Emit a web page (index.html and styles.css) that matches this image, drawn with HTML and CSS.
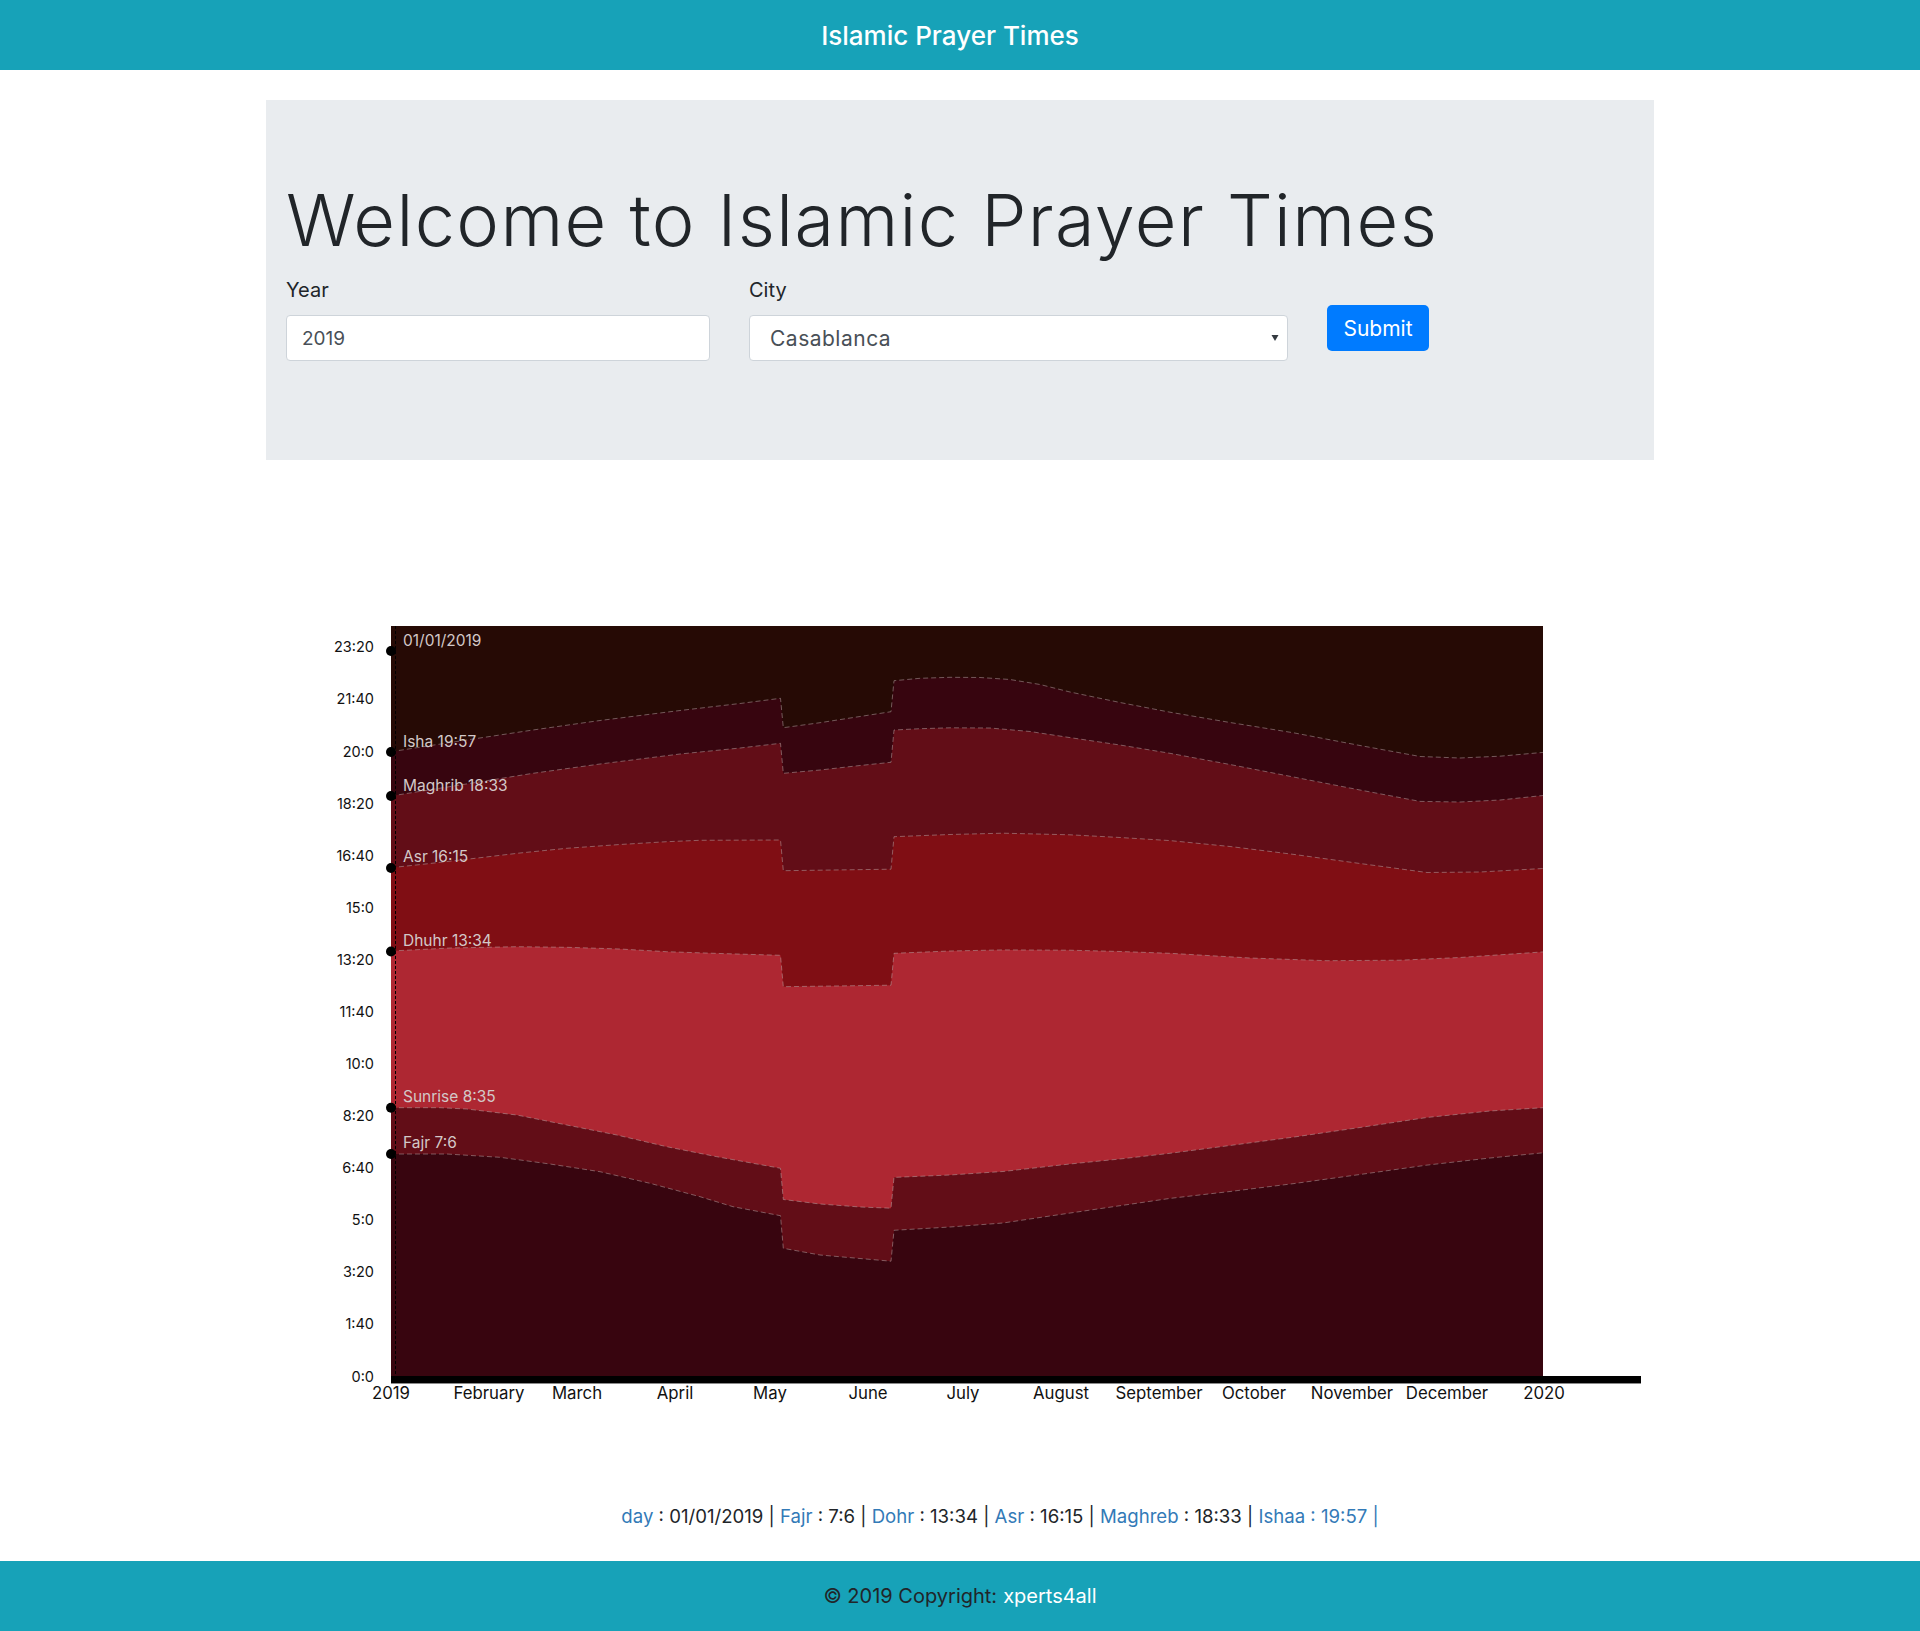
FILE: index.html
```html
<!DOCTYPE html>
<html lang="en">
<head>
<meta charset="utf-8">
<title>Islamic Prayer Times</title>
<link rel="stylesheet" href="styles.css">
</head>
<body>
<header class="topbar"><span class="brand">Islamic Prayer Times</span></header>

<section class="jumbo">
  <h1 class="display">Welcome to Islamic Prayer Times</h1>
  <form class="form-row">
    <div class="group group-year">
      <label class="lbl" for="year">Year</label>
      <input class="ctrl ctrl-year" id="year" type="text" value="2019">
    </div>
    <div class="group group-city">
      <label class="lbl">City</label>
      <div class="ctrl select"><span>Casablanca</span><svg class="caret" width="8" height="6" viewBox="0 0 8 6"><polygon points="0.5,0 7.5,0 4,6" fill="#343a40"/></svg></div>
    </div>
    <button class="btn" type="button">Submit</button>
  </form>
</section>

<section class="chart-wrap">
<svg class="chart" width="1340" height="820" viewBox="320 600 1340 820">
  <rect x="391" y="626" width="1152" height="750" fill="#260a05"/>
  <path fill="#37050f" d="M391,751.7 L460,741 L533,730 L600,720.5 L680,710.5 L740,703.5 L780.5,698.3 L783.3,727.7 L820,722.7 L860,716.5 L891,711.7 L894,680.7 L920,678.3 L950,677.3 L980,677.5 L1010,679.5 L1040,684.5 L1070,692 L1120,702.5 L1170,712.2 L1230,722.5 L1293,732.7 L1360,745.5 L1420,756.5 L1460,758 L1500,756.2 L1543,752.4 L1543,1376 L391,1376 Z"/>
  <path fill="#620d17" d="M391,796 L460,785 L533,773.3 L600,764 L680,754 L740,748 L780.5,743.3 L783.3,773.3 L820,770 L860,765.5 L891,762.3 L894,730 L920,728.7 L950,727.8 L990,728 L1030,731.5 L1070,737.6 L1120,745 L1170,753.3 L1230,764.5 L1293,776.9 L1360,790 L1420,801.4 L1460,802 L1500,800 L1543,795.5 L1543,1376 L391,1376 Z"/>
  <path fill="#800e14" d="M391,867.7 L430,863.5 L466.7,859.3 L520,853 L566.7,848.3 L620,844.5 L666.7,841.7 L700,840.3 L780.5,840 L783.3,870.7 L891,869.2 L894,836.7 L950,834.5 L1003,833.2 L1070,834.8 L1120,837.5 L1170,840.6 L1230,846.5 L1293,854.3 L1360,863.5 L1427,872.5 L1480,872 L1543,868.5 L1543,1376 L391,1376 Z"/>
  <path fill="#ae2732" d="M391,951 L450,948 L516.7,946.7 L566.7,947.3 L620,949 L666.7,951.7 L720,953.5 L780.5,955.3 L783.3,986.7 L891,985.2 L894,953.3 L950,951 L1003,949.9 L1070,950.2 L1120,951.5 L1170,953.3 L1250,958 L1327,960.7 L1400,960.2 L1460,957.5 L1543,951.9 L1543,1376 L391,1376 Z"/>
  <path fill="#620d17" d="M391,1107.7 L440,1107.7 L466.7,1109 L516.7,1115 L566.7,1125 L616.7,1135 L666.7,1146.7 L716.7,1156.7 L780.5,1168.3 L783.3,1199.5 L820,1204 L860,1207 L891,1208.2 L894,1177.4 L950,1175 L1003,1171.5 L1070,1164 L1120,1159 L1170,1153.3 L1230,1145.5 L1293,1137.2 L1360,1127.5 L1427,1117.5 L1490,1111 L1543,1107.7 L1543,1376 L391,1376 Z"/>
  <path fill="#38050f" d="M391,1154 L446.7,1154 L500,1157.3 L550,1164 L600,1171.7 L650,1183.3 L700,1196.7 L733,1206.7 L780.5,1215.7 L783.3,1248.3 L820,1255 L860,1258.5 L891,1261.2 L894,1230.3 L950,1227 L1003,1223 L1050,1216 L1103,1208.2 L1170,1198.4 L1230,1191.5 L1293,1183.7 L1360,1174.5 L1427,1165.1 L1490,1158 L1543,1152.8 L1543,1376 L391,1376 Z"/>

  <g class="edges">
    <path d="M391,751.7 L460,741 L533,730 L600,720.5 L680,710.5 L740,703.5 L780.5,698.3 L783.3,727.7 L820,722.7 L860,716.5 L891,711.7 L894,680.7 L920,678.3 L950,677.3 L980,677.5 L1010,679.5 L1040,684.5 L1070,692 L1120,702.5 L1170,712.2 L1230,722.5 L1293,732.7 L1360,745.5 L1420,756.5 L1460,758 L1500,756.2 L1543,752.4"/>
    <path d="M391,796 L460,785 L533,773.3 L600,764 L680,754 L740,748 L780.5,743.3 L783.3,773.3 L820,770 L860,765.5 L891,762.3 L894,730 L920,728.7 L950,727.8 L990,728 L1030,731.5 L1070,737.6 L1120,745 L1170,753.3 L1230,764.5 L1293,776.9 L1360,790 L1420,801.4 L1460,802 L1500,800 L1543,795.5"/>
    <path d="M391,867.7 L430,863.5 L466.7,859.3 L520,853 L566.7,848.3 L620,844.5 L666.7,841.7 L700,840.3 L780.5,840 L783.3,870.7 L891,869.2 L894,836.7 L950,834.5 L1003,833.2 L1070,834.8 L1120,837.5 L1170,840.6 L1230,846.5 L1293,854.3 L1360,863.5 L1427,872.5 L1480,872 L1543,868.5"/>
    <path d="M391,951 L450,948 L516.7,946.7 L566.7,947.3 L620,949 L666.7,951.7 L720,953.5 L780.5,955.3 L783.3,986.7 L891,985.2 L894,953.3 L950,951 L1003,949.9 L1070,950.2 L1120,951.5 L1170,953.3 L1250,958 L1327,960.7 L1400,960.2 L1460,957.5 L1543,951.9"/>
    <path d="M391,1107.7 L440,1107.7 L466.7,1109 L516.7,1115 L566.7,1125 L616.7,1135 L666.7,1146.7 L716.7,1156.7 L780.5,1168.3 L783.3,1199.5 L820,1204 L860,1207 L891,1208.2 L894,1177.4 L950,1175 L1003,1171.5 L1070,1164 L1120,1159 L1170,1153.3 L1230,1145.5 L1293,1137.2 L1360,1127.5 L1427,1117.5 L1490,1111 L1543,1107.7"/>
    <path d="M391,1154 L446.7,1154 L500,1157.3 L550,1164 L600,1171.7 L650,1183.3 L700,1196.7 L733,1206.7 L780.5,1215.7 L783.3,1248.3 L820,1255 L860,1258.5 L891,1261.2 L894,1230.3 L950,1227 L1003,1223 L1050,1216 L1103,1208.2 L1170,1198.4 L1230,1191.5 L1293,1183.7 L1360,1174.5 L1427,1165.1 L1490,1158 L1543,1152.8"/>
  </g>

  <line class="cursor" x1="395.5" y1="626" x2="395.5" y2="1376"/>

  <rect x="391" y="1376" width="1250" height="7" fill="#000"/>
  <rect x="391" y="1383" width="1250" height="1" fill="#8a8a8a"/>

  <g class="dots">
    <circle cx="391" cy="651" r="5"/>
    <circle cx="391" cy="752" r="5"/>
    <circle cx="391" cy="796" r="5"/>
    <circle cx="391" cy="868" r="5"/>
    <circle cx="391" cy="951.5" r="5"/>
    <circle cx="391" cy="1107.7" r="5"/>
    <circle cx="391" cy="1154" r="5"/>
  </g>

  <g class="marks">
    <text x="403" y="645.5">01/01/2019</text>
    <text x="403" y="747">Isha 19:57</text>
    <text x="403" y="791">Maghrib 18:33</text>
    <text x="403" y="862">Asr 16:15</text>
    <text x="403" y="946">Dhuhr 13:34</text>
    <text x="403" y="1102">Sunrise 8:35</text>
    <text x="403" y="1147.5">Fajr 7:6</text>
  </g>

  <g class="yticks">
    <text x="374" y="1381.5">0:0</text>
    <text x="374" y="1329.4">1:40</text>
    <text x="374" y="1277.3">3:20</text>
    <text x="374" y="1225.2">5:0</text>
    <text x="374" y="1173.2">6:40</text>
    <text x="374" y="1121.1">8:20</text>
    <text x="374" y="1069">10:0</text>
    <text x="374" y="1016.9">11:40</text>
    <text x="374" y="964.8">13:20</text>
    <text x="374" y="912.7">15:0</text>
    <text x="374" y="860.7">16:40</text>
    <text x="374" y="808.6">18:20</text>
    <text x="374" y="756.5">20:0</text>
    <text x="374" y="704.4">21:40</text>
    <text x="374" y="652.3">23:20</text>
  </g>

  <g class="xticks">
    <text x="391" y="1398.5">2019</text>
    <text x="489" y="1398.5">February</text>
    <text x="577" y="1398.5">March</text>
    <text x="675" y="1398.5">April</text>
    <text x="770" y="1398.5">May</text>
    <text x="868" y="1398.5">June</text>
    <text x="963" y="1398.5">July</text>
    <text x="1061" y="1398.5">August</text>
    <text x="1159" y="1398.5">September</text>
    <text x="1254" y="1398.5">October</text>
    <text x="1352" y="1398.5">November</text>
    <text x="1447" y="1398.5">December</text>
    <text x="1544" y="1398.5">2020</text>
  </g>
</svg>
</section>

<p class="dayline"><span class="k">day</span> : 01/01/2019 | <span class="k">Fajr</span> : 7:6 | <span class="k">Dohr</span> : 13:34 | <span class="k">Asr</span> : 16:15 | <span class="k">Maghreb</span> : 18:33 | <span class="k">Ishaa : 19:57 |</span></p>

<footer class="foot">© 2019 Copyright: <span class="site">xperts4all</span></footer>
</body>
</html>
```

FILE: styles.css
```css
* { box-sizing: border-box; }
html, body { margin: 0; padding: 0; }
body {
  font-family: "Inter", "Open Sans", "Liberation Sans", sans-serif;
  color: #212529;
  background: #fff;
  width: 1920px;
}

.topbar {
  height: 70px;
  background: #17a2b8;
  display: flex;
  align-items: center;
  justify-content: center;
  padding-right: 20px;
}
.brand {
  color: #fff;
  font-size: 26px;
  font-weight: 500;
  line-height: 1;
  padding-top: 1px;
}

.jumbo {
  width: 1388px;
  height: 360px;
  margin: 30px auto 0;
  padding: 77px 20px 0;
  background: #e9ecef;
}
.display {
  margin: 0 0 12px;
  font-size: 72px;
  font-weight: 300;
  line-height: 86px;
  letter-spacing: 1.4px;
  color: #212529;
}
.form-row {
  display: flex;
  align-items: flex-start;
  gap: 39px;
}
.group { display: flex; flex-direction: column; }
.group-year { width: 424px; }
.group-city { width: 539px; }
.lbl {
  font-size: 20px;
  line-height: 30px;
  margin-bottom: 10px;
  color: #212529;
}
.ctrl {
  height: 46px;
  border: 1px solid #ced4da;
  border-radius: 4px;
  background: #fff;
  font-family: inherit;
  font-size: 21px;
  color: #495057;
  padding: 0 15px;
  outline: none;
}
.ctrl-year { font-size: 19px; }
.select {
  display: flex;
  align-items: center;
  justify-content: space-between;
  padding: 0 8px 0 20px;
  letter-spacing: 0.5px;
}
.caret { display: block; }
.btn {
  margin-top: 30px;
  width: 102px;
  height: 46px;
  border: 0;
  border-radius: 5px;
  background: #007bff;
  color: #fff;
  font-family: inherit;
  font-size: 21px;
  padding: 0;
}

.chart-wrap {
  padding: 140px 0 0 320px;
  height: 960px;
}
.chart { display: block; }
.edges path {
  fill: none;
  stroke: #b9a9a9;
  stroke-opacity: 0.5;
  stroke-width: 1;
  stroke-dasharray: 5 3;
}
.cursor {
  stroke: #000;
  stroke-width: 1;
  stroke-dasharray: 3 2;
}
.dots circle { fill: #000; }
.marks text {
  font-family: "Inter", "Open Sans", sans-serif;
  font-size: 15.5px;
  fill: #d3c8c8;
}
.yticks text {
  font-family: "Inter", "Open Sans", sans-serif;
  font-size: 14.5px;
  fill: #111;
  text-anchor: end;
}
.xticks text {
  font-family: "Inter", "Open Sans", sans-serif;
  font-size: 16.8px;
  fill: #111;
  text-anchor: middle;
}

.dayline {
  margin: 0;
  height: 141px;
  padding: 84px 0 0 80px;
  text-align: center;
  font-size: 18.6px;
  line-height: 24px;
  color: #212529;
}
.dayline .k { color: #337ab7; }

.foot {
  height: 70px;
  background: #17a2b8;
  display: flex;
  align-items: center;
  justify-content: center;
  font-size: 20px;
  color: #212529;
}
.foot .site { color: #fff; margin-left: 0.3em; }
```
